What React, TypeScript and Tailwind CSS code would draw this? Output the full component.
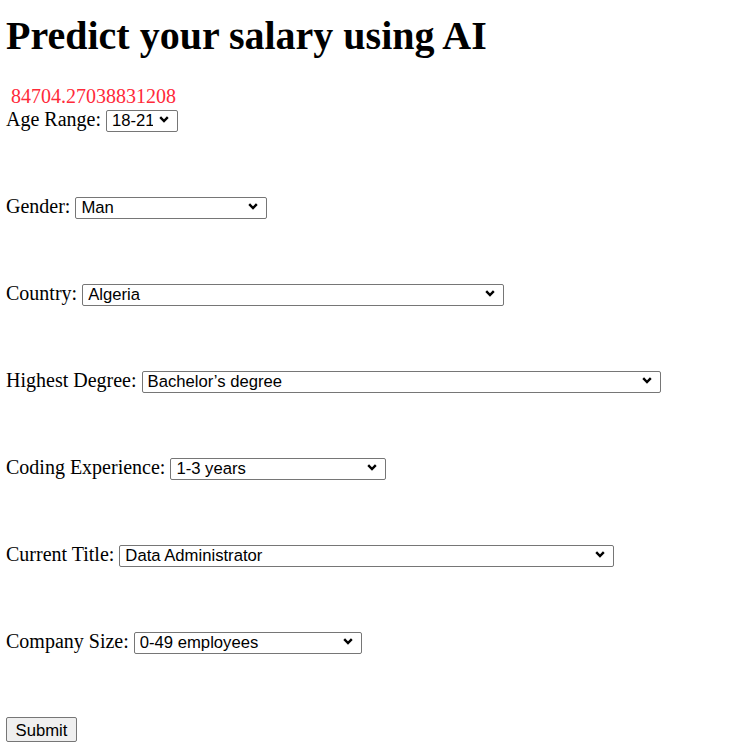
import React from 'react';

const fields: { label: string; value: string; width: number }[] = [
  { label: 'Age Range:', value: '18-21', width: 72 },
  { label: 'Gender:', value: 'Man', width: 192 },
  { label: 'Country:', value: 'Algeria', width: 422 },
  { label: 'Highest Degree:', value: 'Bachelor’s degree', width: 519 },
  { label: 'Coding Experience:', value: '1-3 years', width: 216 },
  { label: 'Current Title:', value: 'Data Administrator', width: 495 },
  { label: 'Company Size:', value: '0-49 employees', width: 228 },
];

const Select: React.FC<{ value: string; width: number }> = ({ value, width }) => (
  <span className="relative inline-block align-baseline" style={{ width }}>
    <select
      defaultValue={value}
      style={{ width }}
      className="appearance-none h-[22px] bg-white border border-[#767676] rounded-[2px] pl-[5px] pr-6 text-[16.67px] leading-[20px] text-black font-['Liberation_Sans',Arial,sans-serif] align-baseline"
    >
      <option>{value}</option>
    </select>
    <svg
      className="absolute right-[9px] top-[8px] pointer-events-none"
      width="10"
      height="7"
      viewBox="0 0 10 7"
    >
      <path d="M1.2 1.2 L5 5 L8.8 1.2" fill="none" stroke="black" strokeWidth="2.4" />
    </svg>
  </span>
);

export default function App() {
  return (
    <div className="bg-white min-h-[752px] pl-[6px] text-black font-['Liberation_Serif','Times_New_Roman',serif] text-[20px]">
      <h1 className="pt-[13px] text-[40px] leading-[46px] font-bold">Predict your salary using AI</h1>
      <form>
        <div className="mt-[26px] leading-[23px] pl-[5px] text-[#ff2a3a]">84704.27038831208</div>
        {fields.map((f) => (
          <div key={f.label} className="h-[87px] leading-[23px]">
            {f.label} <Select value={f.value} width={f.width} />
          </div>
        ))}
        <button
          type="button"
          className="block w-[71px] h-[25px] bg-[#efefef] border border-[#767676] rounded-[2px] text-[16.67px] font-['Liberation_Sans',Arial,sans-serif] text-black"
        >
          Submit
        </button>
      </form>
    </div>
  );
}
